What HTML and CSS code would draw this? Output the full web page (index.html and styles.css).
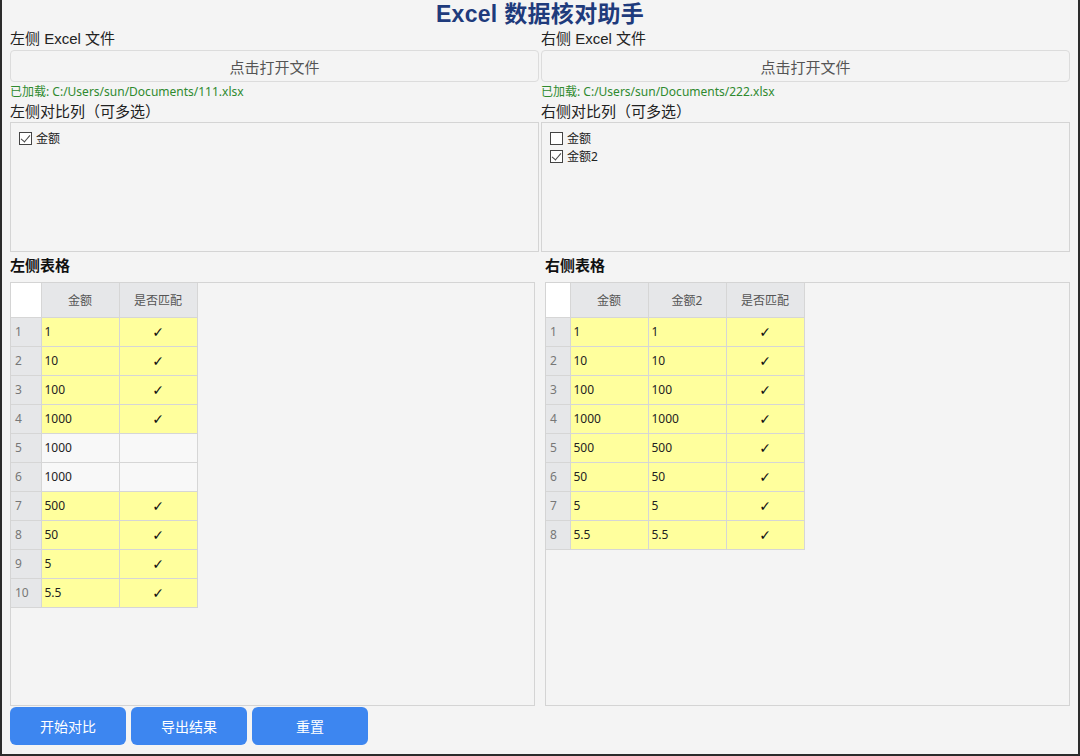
FILE: index.html
```html
<!DOCTYPE html>
<html lang="zh">
<head>
<meta charset="utf-8">
<title>Excel 数据核对助手</title>
<link rel="stylesheet" href="styles.css">
</head>
<body>
<div class="window">
  <h1 class="title">Excel 数据核对助手</h1>
  <div class="top">
    <div class="col">
      <div class="label">左侧 Excel 文件</div>
      <button class="open">点击打开文件</button>
      <div class="loaded">已加载: C:/Users/sun/Documents/111.xlsx</div>
      <div class="label2">左侧对比列（可多选）</div>
      <div class="listbox">
        <label class="item"><span class="cb checked"></span>金额</label>
      </div>
    </div>
    <div class="col">
      <div class="label">右侧 Excel 文件</div>
      <button class="open">点击打开文件</button>
      <div class="loaded">已加载: C:/Users/sun/Documents/222.xlsx</div>
      <div class="label2">右侧对比列（可多选）</div>
      <div class="listbox">
        <label class="item"><span class="cb"></span>金额</label>
        <label class="item"><span class="cb checked"></span>金额2</label>
      </div>
    </div>
  </div>
  <div class="tables">
    <div class="tcol">
      <div class="tlabel">左侧表格</div>
      <div class="frame">
        <table class="grid left">
          <colgroup><col class="c-idx"><col class="c-data"><col class="c-data"></colgroup>
          <thead><tr><th class="corner"></th><th>金额</th><th>是否匹配</th></tr></thead>
          <tbody>
            <tr class="hit"><th>1</th><td>1</td><td class="ok">✓</td></tr>
            <tr class="hit"><th>2</th><td>10</td><td class="ok">✓</td></tr>
            <tr class="hit"><th>3</th><td>100</td><td class="ok">✓</td></tr>
            <tr class="hit"><th>4</th><td>1000</td><td class="ok">✓</td></tr>
            <tr><th>5</th><td>1000</td><td class="ok"></td></tr>
            <tr><th>6</th><td>1000</td><td class="ok"></td></tr>
            <tr class="hit"><th>7</th><td>500</td><td class="ok">✓</td></tr>
            <tr class="hit"><th>8</th><td>50</td><td class="ok">✓</td></tr>
            <tr class="hit"><th>9</th><td>5</td><td class="ok">✓</td></tr>
            <tr class="hit"><th>10</th><td>5.5</td><td class="ok">✓</td></tr>
          </tbody>
        </table>
      </div>
    </div>
    <div class="tcol">
      <div class="tlabel">右侧表格</div>
      <div class="frame">
        <table class="grid right">
          <colgroup><col class="c-idx-s"><col class="c-data"><col class="c-data"><col class="c-data"></colgroup>
          <thead><tr><th class="corner"></th><th>金额</th><th>金额2</th><th>是否匹配</th></tr></thead>
          <tbody>
            <tr class="hit"><th>1</th><td>1</td><td>1</td><td class="ok">✓</td></tr>
            <tr class="hit"><th>2</th><td>10</td><td>10</td><td class="ok">✓</td></tr>
            <tr class="hit"><th>3</th><td>100</td><td>100</td><td class="ok">✓</td></tr>
            <tr class="hit"><th>4</th><td>1000</td><td>1000</td><td class="ok">✓</td></tr>
            <tr class="hit"><th>5</th><td>500</td><td>500</td><td class="ok">✓</td></tr>
            <tr class="hit"><th>6</th><td>50</td><td>50</td><td class="ok">✓</td></tr>
            <tr class="hit"><th>7</th><td>5</td><td>5</td><td class="ok">✓</td></tr>
            <tr class="hit"><th>8</th><td>5.5</td><td>5.5</td><td class="ok">✓</td></tr>
          </tbody>
        </table>
      </div>
    </div>
  </div>
  <div class="actions">
    <button class="btn">开始对比</button>
    <button class="btn">导出结果</button>
    <button class="btn">重置</button>
  </div>
</div>
</body>
</html>
```
FILE: styles.css
```css
html, body {
  margin: 0;
  padding: 0;
  background: #2b2b2b;
}
body {
  font-family: "Noto Sans", "Noto Sans CJK SC", sans-serif;
  color: #222;
}
.window {
  box-sizing: border-box;
  width: 1076px;
  height: 754px;
  margin-left: 2px;
  background: #f4f4f4;
  padding: 0 8px 0 8px;
  display: flex;
  flex-direction: column;
}
.title {
  margin: 0;
  height: 28px;
  line-height: 28px;
  text-align: center;
  font-family: "Liberation Sans", "Noto Sans CJK SC", sans-serif;
  font-size: 23px;
  font-weight: 700;
  color: #1f3b7c;
  letter-spacing: 0.3px;
}
.top {
  display: grid;
  grid-template-columns: 529px 529px;
  column-gap: 2px;
}
.col {
  display: flex;
  flex-direction: column;
}
.label, .label2 {
  font-family: "Liberation Sans", "Noto Sans CJK SC", sans-serif;
  font-size: 15px;
  line-height: 22px;
  height: 20px;
  color: #222;
}
.open {
  margin-top: 2px;
  height: 32px;
  box-sizing: border-box;
  border: 1px solid #dcdcdc;
  border-radius: 4px;
  background: #f4f4f4;
  font-family: "Noto Sans CJK SC", sans-serif;
  font-size: 15px;
  color: #555;
  padding: 0;
}
.loaded {
  font-size: 12px;
  line-height: 18px;
  height: 18px;
  margin-top: 1px;
  color: #2f8a2f;
}
.listbox {
  margin-top: 1px;
  height: 130px;
  box-sizing: border-box;
  border: 1px solid #d4d4d4;
  padding: 7px 8px;
  display: flex;
  flex-direction: column;
  gap: 2px;
}
.item {
  display: flex;
  align-items: center;
  height: 16px;
  font-size: 12px;
  color: #222;
}
.cb {
  box-sizing: border-box;
  width: 13px;
  height: 13px;
  border: 1px solid #444;
  background: #fff;
  margin-right: 4px;
  position: relative;
}
.cb.checked::after {
  content: "";
  position: absolute;
  left: 3px;
  top: 0px;
  width: 4px;
  height: 8px;
  border-right: 1.5px solid #444;
  border-bottom: 1.5px solid #444;
  transform: rotate(40deg);
}
.tables {
  display: grid;
  grid-template-columns: 525px 525px;
  column-gap: 10px;
  flex: 0 0 auto;
}
.tcol {
  display: flex;
  flex-direction: column;
}
.tlabel {
  font-family: "Noto Sans CJK SC", sans-serif;
  font-weight: 700;
  font-size: 15px;
  height: 29px;
  line-height: 24px;
  margin-top: 1px;
  color: #111;
}
.frame {
  box-sizing: border-box;
  height: 424px;
  border: 1px solid #d4d4d4;
  background: #f4f4f4;
}
.grid {
  border-collapse: collapse;
  table-layout: fixed;
  font-size: 12px;
}
.c-idx { width: 30px; }
.c-idx-s { width: 24px; }
.c-data { width: 78px; }
.grid th, .grid td {
  border: 1px solid #d6d6d6;
  height: 29px;
  padding: 0 0 0 3px;
  box-sizing: border-box;
  white-space: nowrap;
}
.grid thead th {
  height: 34px;
  background: #e6e7e9;
  font-weight: 400;
  color: #555;
  text-align: center;
  padding: 0;
  border-top: none;
}
.grid thead th.corner {
  background: #fff;
  border-left: none;
}
.grid tbody th {
  background: #e6e7e9;
  color: #777;
  font-weight: 400;
  text-align: left;
  padding-left: 4px;
  border-left: none;
}
.grid tbody td {
  background: #f8f8f8;
  color: #222;
}
.grid tbody tr.hit td {
  background: #ffff9d;
}
.grid td.ok {
  text-align: center;
  padding: 0;
  font-family: "DejaVu Sans", sans-serif;
  font-size: 14px;
  color: #111;
}
.actions {
  display: flex;
  gap: 5px;
  margin-top: 1px;
}
.btn {
  width: 116px;
  height: 38px;
  border: none;
  border-radius: 6px;
  background: #3d86f0;
  color: #fff;
  font-family: "Noto Sans CJK SC", sans-serif;
  font-size: 14px;
  padding: 0;
}
```
